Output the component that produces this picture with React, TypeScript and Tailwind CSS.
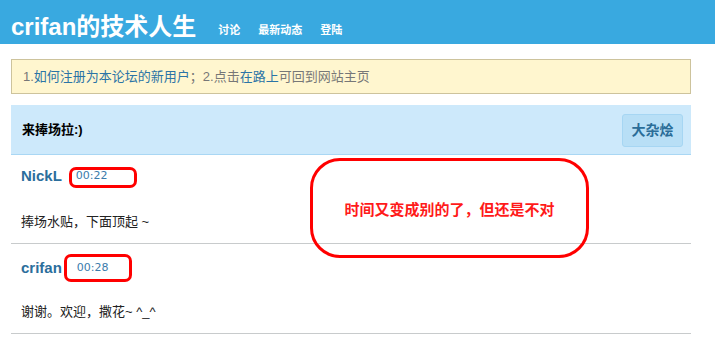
import React from "react";

const cjk = { fontFamily: '"Liberation Sans", "Noto Sans CJK SC", sans-serif' };
const verd = { fontFamily: '"DejaVu Sans", "Noto Sans CJK SC", sans-serif' };

export default function App() {
  return (
    <div className="relative w-[715px] h-[344px] overflow-hidden bg-white" style={cjk}>
      {/* header */}
      <div className="h-[44px] bg-[#39a9e0] flex items-start pl-[11px]">
        <div className="text-white font-bold text-[24px] leading-none mt-[15px]">crifan的技术人生</div>
        <div className="flex items-center gap-[18px] ml-[22px] mt-[23px] text-white font-bold text-[11px] leading-[14px]">
          <span>讨论</span>
          <span>最新动态</span>
          <span>登陆</span>
        </div>
      </div>

      <div className="ml-[11px] w-[680px]">
        {/* notice */}
        <div className="mt-[15px] h-[35px] bg-[#fff6cf] border border-[#cdc39c] flex items-center pl-[11px] text-[13px] text-[#777]">
          <span>1.</span>
          <span className="text-[#2b74a6]">如何注册为本论坛的新用户</span>
          <span>；2.点击</span>
          <span className="text-[#2b74a6]">在路上</span>
          <span>可回到网站主页</span>
        </div>

        {/* panel */}
        <div className="mt-[11px] h-[50px] bg-[#cde9fb] border-b border-[#a9d7f4] flex items-center justify-between pl-[11px] pr-[8px]">
          <span className="font-bold text-[13px] text-black">来捧场拉:)</span>
          <button className="h-[33px] w-[61px] rounded-[3px] bg-[#b8dff6] border border-[#a6d6f3] text-[#2a6d98] font-bold text-[14px] mt-[1px]">
            大杂烩
          </button>
        </div>

        {/* post 1 */}
        <div className="pt-[10px] pb-[12px] border-b border-[#c8cbcc] pl-[10px]">
          <div className="h-[22px] flex items-center">
            <span className="font-bold text-[15px] text-[#2b6e9c]">NickL</span>
            <span className="ml-[14px] text-[11px] text-[#3a7bab] mt-[1px]" style={verd}>00:22</span>
          </div>
          <div className="mt-[26px] h-[18px] flex items-center text-[13px] text-[#222]">捧场水贴，下面顶起 ~</div>
        </div>

        {/* post 2 */}
        <div className="pt-[13px] pb-[12px] border-b border-[#c8cbcc] pl-[10px]">
          <div className="h-[22px] flex items-center">
            <span className="font-bold text-[15px] text-[#2b6e9c]">crifan</span>
            <span className="ml-[15px] text-[11px] text-[#3a7bab] mt-[1px]" style={verd}>00:28</span>
          </div>
          <div className="mt-[24px] h-[18px] flex items-center text-[13px] text-[#222]">谢谢。欢迎，撒花~ ^_^</div>
        </div>
      </div>

      {/* annotations */}
      <div className="absolute left-[69px] top-[167px] w-[68px] h-[21px] border-[3px] border-[#ff0000] rounded-[7px]" />
      <div className="absolute left-[64px] top-[254px] w-[68px] h-[28px] border-[3px] border-[#ff0000] rounded-[7px]" />
      <div className="absolute left-[310px] top-[158px] w-[279px] h-[100px] border-[3px] border-[#ff0000] rounded-[30px] flex items-center justify-center">
        <span className="text-[#ff1a1a] font-bold text-[15px] mt-[4px]">时间又变成别的了，但还是不对</span>
      </div>
    </div>
  );
}
